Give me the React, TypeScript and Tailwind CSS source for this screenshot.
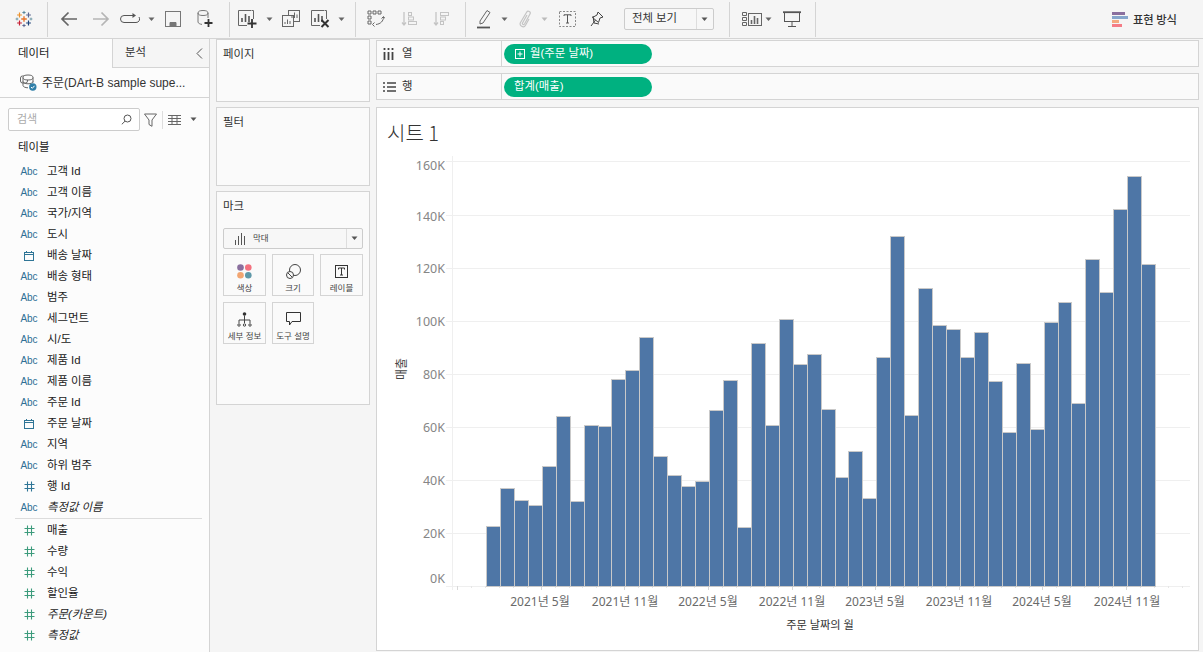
import React from "react";

const FONT = '"Liberation Sans", "Noto Sans CJK KR", sans-serif';
const CHARTFONT = '"Noto Sans", "Noto Sans CJK KR", sans-serif';
const KFONT = '"Noto Sans CJK KR", "Noto Sans", sans-serif';

const tops = [527,489,501,506,467,417,502,426,427,380,371,338,457,476,487,482,411,381,528,344,426,320,365,355,410,478,452,499,358,237,416,289,326,330,358,333,382,433,364,430,323,303,404,260,293,210,177,265];
const grid = [161,215,268,321,374,427,480,533,586];
const yLabels: [string, number][] = [["160K",165],["140K",216],["120K",268],["100K",321],["80K",374],["60K",427],["40K",480],["20K",533],["0K",578]];
const xLabels: [string, number][] = [["2021년 5월",540],["2021년 11월",625],["2022년 5월",708],["2022년 11월",792],["2023년 5월",875],["2023년 11월",959],["2024년 5월",1042],["2024년 11월",1127]];

const Sep = () => <div className="h-[35px] w-px shrink-0 bg-[#d4d4d4]" />;
const Slot = ({ w, children }: { w: number; children?: React.ReactNode }) => (
  <div className="flex shrink-0 items-center justify-center" style={{ width: w }}>{children}</div>
);
const Caret = ({ c = "#666" }: { c?: string }) => (
  <svg width="8" height="5" viewBox="0 0 8 5"><path d="M0.5 0.5h6l-3 3.5z" fill={c} /></svg>
);

const Logo = () => {
  const plus = (x: number, y: number, s: number, c: string, w = 1.4) => (
    <path key={`${x}${y}`} d={`M${x - s} ${y}h${2 * s}M${x} ${y - s}v${2 * s}`} stroke={c} strokeWidth={w} />
  );
  return (
    <svg width="18" height="18" viewBox="0 0 18 18" fill="none">
      {plus(9, 9, 2.8, "#e8762d", 1.4)}
      {plus(9, 2.5, 1.6, "#5b879b", 1)}
      {plus(9, 15.5, 1.6, "#5b6591", 1)}
      {plus(2, 9, 1.4, "#7099a6", 1)}
      {plus(16, 9, 1.4, "#7099a6", 1)}
      {plus(4.5, 5, 2.4, "#eb912b", 1.2)}
      {plus(13.5, 5, 2.4, "#5c6692", 1.2)}
      {plus(4.5, 13, 2.4, "#c72035", 1.2)}
      {plus(13.5, 13, 2.4, "#1f447a", 1.2)}
    </svg>
  );
};

const BarsSquare = ({ extra }: { extra?: React.ReactNode }) => (
  <svg width="22" height="20" viewBox="0 0 22 20" fill="none">
    <path d="M14 1.500H1.500v15H10" stroke="#666" />
    <path d="M14.500 1.500H16.500V10" stroke="#666" />
    <path d="M5 13V9M8.500 13V5M12 13V7" stroke="#555" strokeWidth="1.600" />
    {extra}
  </svg>
);

const Abc = () => <span className="text-[10px] leading-none text-[#2f6f95]">Abc</span>;
const Cal = () => (
  <svg width="12" height="12" viewBox="0 0 12 12" fill="none" stroke="#2f7596"><rect x="1.500" y="2.500" width="9" height="8" /><path d="M1.500 4.500h9M3.500 1v2M8.500 1v2" /></svg>
);
const Hash = ({ c }: { c: string }) => (
  <svg width="11" height="11" viewBox="0 0 11 11" fill="none" stroke={c} strokeWidth="1.100"><path d="M0.500 3.500h10M0.500 7.500h10M3.500 0.500v10M7.500 0.500v10" /></svg>
);

type F = [string, "a" | "c" | "hb" | "hg", boolean?];
const dims: F[] = [["고객 Id","a"],["고객 이름","a"],["국가/지역","a"],["도시","a"],["배송 날짜","c"],["배송 형태","a"],["범주","a"],["세그먼트","a"],["시/도","a"],["제품 Id","a"],["제품 이름","a"],["주문 Id","a"],["주문 날짜","c"],["지역","a"],["하위 범주","a"],["행 Id","hb"],["측정값 이름","a",true]];
const meas: F[] = [["매출","hg"],["수량","hg"],["수익","hg"],["할인율","hg"],["주문(카운트)","hg",true],["측정값","hg",true]];

const Field = ({ f }: { f: F }) => (
  <div className="flex h-[21px] items-center">
    <div className="flex w-[47px] shrink-0 items-center justify-center pl-[11px]">
      {f[1] === "a" && <Abc />}
      {f[1] === "c" && <Cal />}
      {f[1] === "hb" && <Hash c="#2f7596" />}
      {f[1] === "hg" && <Hash c="#3c9b7c" />}
    </div>
    <span className={`text-[11.4px] text-[#222] ${f[2] ? "italic" : ""}`}>{f[0]}</span>
  </div>
);

const MarkBtn = ({ label, children }: { label: string; children: React.ReactNode }) => (
  <div className="flex h-[42px] flex-col items-center border border-[#d4d4d4] bg-[#fafafa]">
    <div className="flex h-[28px] items-center justify-center pt-1">{children}</div>
    <span className="whitespace-nowrap text-[8.5px] leading-[10px] text-[#444]">{label}</span>
  </div>
);

const Shelf = ({ icon, name, pill, plus }: { icon: React.ReactNode; name: string; pill: string; plus?: boolean }) => (
  <div className="flex h-[27px] items-center border border-[#d4d4d4] bg-[#fafafa]">
    <div className="flex h-full w-[125px] shrink-0 items-center border-r border-[#d4d4d4] pl-[6px]">
      <div className="flex w-[19px] justify-start">{icon}</div>
      <span className="text-[11.4px] text-[#333]">{name}</span>
    </div>
    <div className="ml-[2px] flex h-[20px] w-[148px] items-center gap-[5px] rounded-full bg-[#00b180] pl-[11px] text-[11.4px] text-white">
      {plus && (
        <svg width="10" height="10" viewBox="0 0 10 10" fill="none" stroke="#fff"><rect x="0.500" y="0.500" width="9" height="9" /><path d="M2.500 5h5M5 2.500v5" /></svg>
      )}
      <span className={plus ? "" : "-ml-[1px]"}>{pill}</span>
    </div>
  </div>
);

const Chart = () => (
  <svg className="block h-full w-full" viewBox="377 108 821 542" fill="none" style={{ fontFamily: CHARTFONT }}>
    {grid.map((y) => <path key={y} d={`M446 ${y + 0.5}H1190`} stroke="#efefef" />)}
    <path d="M452.500 156V590" stroke="#efefef" />
    {Array.from({ length: 53 }, (_, i) => {
      const x = Math.round(457 + i * 13.94) + 0.5;
      const major = i % 6 === 0;
      return <path key={i} d={`M${x} 586V${major ? 590 : 588}`} stroke={major ? "#d8d8d8" : "#e6e6e6"} />;
    })}
    {tops.map((t, i) => {
      const x0 = Math.round(486 + i * 13.94);
      const x1 = Math.round(486 + (i + 1) * 13.94);
      return <rect key={i} x={x0 + 0.5} y={t - 0.5} width={x1 - x0} height={586 - t + 1} fill="#4e76a6" stroke="#c9c9c9" />;
    })}
    {yLabels.map(([l, y]) => <text key={l} x="445" y={y + 4.5} textAnchor="end" fontSize="12.500" fill="#868686">{l}</text>)}
    {xLabels.map(([l, x]) => <text key={l} x={x} y="606" textAnchor="middle" fontSize="12" fill="#6a6a6a">{l}</text>)}
    <text x="820" y="629" textAnchor="middle" fontSize="11.200" fill="#333">주문 날짜의 월</text>
    <text transform="translate(406 369) rotate(-90)" textAnchor="middle" fontSize="12" fill="#444">매출</text>
  </svg>
);

export default function App() {
  return (
    <div className="flex h-[652px] w-[1203px] flex-col overflow-hidden bg-[#f5f5f5]" style={{ fontFamily: FONT }}>
      {/* toolbar */}
      <div className="flex h-[39px] shrink-0 items-center border-b border-[#d4d4d4]">
        <Slot w={47}><Logo /></Slot>
        <Sep />
        <Slot w={42}>
          <svg width="18" height="16" viewBox="0 0 18 16" fill="none" stroke="#666" strokeWidth="1.700"><path d="M17 8H2M8.500 1.500L2 8l6.500 6.500" /></svg>
        </Slot>
        <Slot w={22}>
          <svg width="18" height="16" viewBox="0 0 18 16" fill="none" stroke="#b5b5b5" strokeWidth="1.700"><path d="M1 8h15M9.500 1.500L16 8l-6.500 6.500" /></svg>
        </Slot>
        <Slot w={36}>
          <svg width="20" height="14" viewBox="0 0 20 14" fill="none" stroke="#555"><path d="M13 3.500H4a3.500 3.500 0 0 0 0 7h12a3.500 3.500 0 0 0 3-5.500" /><path d="M12.500 1v5l3.500-2.500z" fill="#555" stroke="none" /></svg>
        </Slot>
        <Slot w={8}><Caret /></Slot>
        <Slot w={34}>
          <svg width="16" height="16" viewBox="0 0 16 16" fill="none" stroke="#777"><rect x="0.500" y="0.500" width="15" height="15" /><path d="M5 15v-3.500h6V15z" fill="#777" /></svg>
        </Slot>
        <Slot w={30}>
          <svg width="16" height="18" viewBox="0 0 16 18" fill="none" stroke="#777"><ellipse cx="6" cy="3" rx="5" ry="2.500" /><path d="M1 3v9c0 1.200 2 2.200 4 2.400M11 3v5" /><path d="M11.500 9v8M7.500 13h8" stroke="#333" strokeWidth="1.800" /></svg>
        </Slot>
        <Slot w={9} />
        <Sep />
        <Slot w={36}>
          <BarsSquare extra={<path d="M15 10v9M10.500 14.500h9" stroke="#333" strokeWidth="1.800" />} />
        </Slot>
        <Slot w={8}><Caret /></Slot>
        <Slot w={34}>
          <svg width="18" height="18" viewBox="0 0 18 18" fill="none" stroke="#666"><rect x="6.500" y="0.500" width="11" height="11" fill="#f5f5f5" /><rect x="0.500" y="5.500" width="11" height="11" fill="#f5f5f5" /><path d="M10 8V5.500M12.500 8V2.500M15 8V4.500M3 14v-2M5.500 14V9.500M8 14v-3" /></svg>
        </Slot>
        <Slot w={26}>
          <BarsSquare extra={<path d="M11.500 11l7 7M18.500 11l-7 7" stroke="#333" strokeWidth="2" />} />
        </Slot>
        <Slot w={4} />
        <Slot w={8}><Caret /></Slot>
        <Slot w={9} />
        <Sep />
        <Slot w={40}>
          <svg width="18" height="18" viewBox="0 0 18 18" fill="none" stroke="#666"><path d="M1 1h3v3H1zM6 1h3v3H6zM11 1h3v3h-3zM1 6h3v3H1zM1 11h3v3H1z" /><path d="M16.500 7c0 4-3 7-7.500 7.500M7.500 12.500l-2 2 2 2M14.500 8.500l2-2 1.500 2" /></svg>
        </Slot>
        <Slot w={26}>
          <svg width="16" height="16" viewBox="0 0 16 16" fill="none" stroke="#c4c4c4"><path d="M3 1v13M1 11.500L3 14l2-2.500" strokeWidth="1.300" /><rect x="7.500" y="1.500" width="3" height="3" /><rect x="7.500" y="6" width="5" height="3" /><rect x="7.500" y="10.500" width="8" height="3" /></svg>
        </Slot>
        <Slot w={38}>
          <svg width="16" height="16" viewBox="0 0 16 16" fill="none" stroke="#c4c4c4"><path d="M3 1v13M1 11.500L3 14l2-2.500" strokeWidth="1.300" /><rect x="7.500" y="1.500" width="8" height="3" /><rect x="7.500" y="6" width="5" height="3" /><rect x="7.500" y="10.500" width="3" height="3" /></svg>
        </Slot>
        <Slot w={5} />
        <Sep />
        <Slot w={35}>
          <svg width="14" height="20" viewBox="0 0 14 20" fill="none" stroke="#666"><path d="M3 12L10 1.500l3 2L6 14l-3 1z" /><path d="M0 18.500h13" stroke="#555" strokeWidth="1.800" /></svg>
        </Slot>
        <Slot w={8}><Caret /></Slot>
        <Slot w={32}>
          <svg width="12" height="18" viewBox="0 0 12 18" fill="none" stroke="#c4c4c4" strokeWidth="1.200"><path d="M8 5L3.500 13c-.6 1.200 1.200 2.200 2 1L11 4c1.200-2.200-2-4-3.400-1.800L1.500 12.500c-1.800 3.200 3.200 6 5 2.800L10 9" /></svg>
        </Slot>
        <Slot w={8}><Caret c="#bbb" /></Slot>
        <Slot w={36}>
          <svg width="17" height="16" viewBox="0 0 17 16" fill="none"><rect x="0.500" y="0.500" width="16" height="15" stroke="#888" strokeDasharray="2 1.500" /><path d="M5 5V3.800h7V5M8.500 3.800v8.200M7 12h3" stroke="#555" /></svg>
        </Slot>
        <Slot w={24}>
          <svg width="14" height="17" viewBox="0 0 14 17" fill="none" stroke="#444"><path d="M8 1l5 5-3 1-1.500 4.500L2.500 6.500 7 4z" /><path d="M5.500 9L1 15" /><path d="M3 5L4 12l5 1" /></svg>
        </Slot>
        <Slot w={15} />
        <div className="flex h-[22px] w-[90px] shrink-0 items-center rounded-[2px] border border-[#ccc] bg-[#f7f7f7]">
          <span className="w-[71px] pl-[7px] text-[11.4px] text-[#333]">전체 보기</span>
          <div className="flex h-full flex-1 items-center justify-center border-l border-[#ddd]"><Caret c="#555" /></div>
        </div>
        <Slot w={15} />
        <Sep />
        <Slot w={12} />
        <Slot w={20}>
          <svg width="20" height="15" viewBox="0 0 20 15" fill="none" stroke="#666"><path d="M.5.500h4v3h-4zM.500 5.500h4v3h-4zM.500 10.500h4v3h-4z" /><rect x="6.500" y="1.500" width="13" height="12" /><path d="M9.500 12V8M12.500 12V4M15.500 12V6" strokeWidth="1.600" /></svg>
        </Slot>
        <Slot w={3} />
        <Slot w={8}><Caret /></Slot>
        <Slot w={38}>
          <svg width="18" height="17" viewBox="0 0 18 17" fill="none" stroke="#555"><path d="M0 1.200h18" strokeWidth="1.800" /><rect x="1.500" y="1.500" width="15" height="9" /><path d="M9 10.500v5M5 15.500h8" /></svg>
        </Slot>
        <Slot w={4} />
        <Sep />
        <div className="ml-auto flex items-center gap-[5px] pr-[26px]">
          <svg width="16" height="15" viewBox="0 0 16 15">
            <rect x="0" y="0" width="13" height="3" fill="#8a6f9e" />
            <rect x="0" y="4" width="16" height="3" fill="#86a6cc" />
            <rect x="0" y="8" width="7" height="3" fill="#f4a97f" />
            <rect x="0" y="12" width="10" height="3" fill="#f47c86" />
          </svg>
          <span className="text-[11.3px] font-medium text-[#333]" style={{ fontFamily: KFONT }}>표현 방식</span>
        </div>
      </div>

      {/* body */}
      <div className="flex min-h-0 flex-1">
        {/* sidebar */}
        <div className="flex w-[210px] shrink-0 flex-col border-r border-[#d4d4d4] bg-[#fcfcfc]">
          <div className="flex h-[29px] shrink-0">
            <div className="flex w-[112px] items-center pl-[18px] text-[11.4px] text-[#222]">데이터</div>
            <div className="flex flex-1 items-center justify-between border-b border-l border-[#d4d4d4] bg-[#f5f5f5] pl-[12px] pr-[6px] text-[11.4px] text-[#333]">
              <span>분석</span>
              <svg width="7" height="11" viewBox="0 0 7 11" fill="none" stroke="#555"><path d="M6 .5L1 5.500l5 5" /></svg>
            </div>
          </div>
          <div className="flex h-[30px] shrink-0 items-center border-b border-[#d4d4d4] pl-[20px]">
            <svg width="17" height="17" viewBox="0 0 17 17" fill="none" stroke="#666" className="mr-[5px]"><rect x="0.500" y="2" width="7" height="7" rx="2" /><ellipse cx="8" cy="3.500" rx="5" ry="2.500" fill="#fcfcfc" /><path d="M3 3.500v8c0 1.200 2.200 2.300 5 2.300M13 3.500v5M3 7.500c0 1.300 2.200 2.300 5 2.300s5-1 5-2.300" /><circle cx="12.800" cy="13" r="3.700" fill="#2f7fa8" stroke="none" /><path d="M11 13l1.300 1.300 2.200-2.500" stroke="#fff" /></svg>
            <span className="text-[12px] text-[#333]">주문(DArt-B sample supe...</span>
          </div>
          <div className="mt-[10px] flex h-[23px] shrink-0 items-center pl-[8px]">
            <div className="flex h-[23px] w-[132px] items-center justify-between rounded-[2px] border border-[#ccc] bg-white pl-[8px] pr-[7px]">
              <span className="text-[11px] text-[#aaa]">검색</span>
              <svg width="11" height="11" viewBox="0 0 11 11" fill="none" stroke="#555"><circle cx="6.500" cy="4.500" r="3.500" /><path d="M4 7.200L.8 10.300" /></svg>
            </div>
            <svg width="13" height="14" viewBox="0 0 13 14" fill="none" stroke="#666" className="ml-[4px]"><path d="M.5 1h12L8 7v6.300L5 11.500V7z" /></svg>
            <div className="ml-[5px] h-[18px] w-px bg-[#ddd]" />
            <svg width="13" height="10" viewBox="0 0 13 10" fill="none" stroke="#666" className="ml-[5px]"><path d="M0 .5h13M0 3.500h13M0 6.500h13M0 9.500h13M4 0v10M9 0v10" /></svg>
            <span className="ml-[9px]"><Caret c="#555" /></span>
          </div>
          <div className="mt-[3px] flex h-[23px] shrink-0 items-center pt-[4px] pl-[18px] text-[11.4px] text-[#222]">테이블</div>
          <div className="mt-[4px]">
            {dims.map((f) => <Field key={f[0]} f={f} />)}
          </div>
          <div className="mb-[1px] ml-[15px] mr-[7px] h-px shrink-0 bg-[#dcdcdc]" />
          <div>
            {meas.map((f) => <Field key={f[0]} f={f} />)}
          </div>
        </div>

        {/* middle */}
        <div className="ml-[6px] flex w-[154px] shrink-0 flex-col gap-[5px]">
          <div className="h-[63px] border border-[#d4d4d4] bg-[#fafafa] px-[6px] pt-[6px] text-[11.4px] text-[#333]">페이지</div>
          <div className="h-[79px] border border-[#d4d4d4] bg-[#fafafa] px-[6px] pt-[6px] text-[11.4px] text-[#333]">필터</div>
          <div className="h-[214px] border border-[#d4d4d4] bg-[#fafafa] px-[6px] pt-[6px]">
            <div className="text-[11.4px] text-[#333]">마크</div>
            <div className="mt-[13px] flex h-[21px] items-center rounded-[2px] border border-[#ccc] bg-[#f7f7f7]">
              <svg width="11" height="12" viewBox="0 0 11 12" fill="none" stroke="#555" className="ml-[11px]"><path d="M.5 12V7M3.500 12V3M6.500 12V0M9.500 12V3" /></svg>
              <span className="ml-[7px] w-[93px] text-[8.5px] text-[#444]">막대</span>
              <div className="flex h-full flex-1 items-center justify-center border-l border-[#ddd]"><Caret c="#555" /></div>
            </div>
            <div className="mt-[5px] grid grid-cols-[43px_42px_43px] gap-x-[6px] gap-y-[6px]">
              <MarkBtn label="색상">
                <svg width="15" height="15" viewBox="0 0 15 15"><circle cx="3.500" cy="3.500" r="3.300" fill="#8a6f9e" /><circle cx="11.300" cy="3.500" r="3.300" fill="#f4717f" /><circle cx="3.500" cy="11.300" r="3.300" fill="#f2a571" /><circle cx="11.300" cy="11.300" r="3.300" fill="#5f98a8" /></svg>
              </MarkBtn>
              <MarkBtn label="크기">
                <svg width="15" height="15" viewBox="0 0 15 15" fill="none" stroke="#444"><circle cx="9" cy="6" r="5.500" /><circle cx="4" cy="11" r="3.500" fill="#fafafa" /><path d="M2 9l4 4" /></svg>
              </MarkBtn>
              <MarkBtn label="레이블">
                <svg width="13" height="13" viewBox="0 0 13 13" fill="none" stroke="#333"><rect x="0.500" y="0.500" width="12" height="12" /><path d="M3.500 4.500V3h6v1.500M6.500 3v7M5 10h3" /></svg>
              </MarkBtn>
              <MarkBtn label="세부 정보">
                <svg width="15" height="15" viewBox="0 0 15 15" fill="none" stroke="#444"><circle cx="7.500" cy="2" r="1.800" fill="#333" stroke="none" /><path d="M7.500 3.500V8M2 11V8h11v3M7.500 8v3" /><circle cx="2" cy="13" r="1.200" /><circle cx="7.500" cy="13" r="1.200" /><circle cx="13" cy="13" r="1.200" /></svg>
              </MarkBtn>
              <MarkBtn label="도구 설명">
                <svg width="15" height="14" viewBox="0 0 15 14" fill="none" stroke="#333"><path d="M.5.500h14v9H6L3.500 13V9.500H.5z" /></svg>
              </MarkBtn>
            </div>
          </div>
        </div>

        {/* right */}
        <div className="ml-[6px] flex min-w-0 w-[823px] shrink-0 flex-col">
          <div className="mt-[1px]">
            <Shelf name="열" pill="월(주문 날짜)" plus icon={<svg width="11" height="12" viewBox="0 0 11 12" stroke="#444" strokeWidth="1.800"><path d="M1.500 4v8M5.500 4v8M9.500 4v8M1.500 0v2M5.500 0v2M9.500 0v2" /></svg>} />
          </div>
          <div className="mt-[6px]">
            <Shelf name="행" pill="합계(매출)" icon={<svg width="13" height="10" viewBox="0 0 13 10" stroke="#444" strokeWidth="1.600"><path d="M0 1h2M4 1h9M0 5h2M4 5h9M0 9h2M4 9h9" /></svg>} />
          </div>
          <div className="relative mt-[7px] h-[544px] border border-[#d4d4d4] bg-white">
            <Chart />
            <span className="absolute left-[10px] top-[11px] text-[20px] leading-[28px] text-[#333]" style={{ fontFamily: KFONT, fontWeight: 300 }}>시트 1</span>
          </div>
        </div>
      </div>
    </div>
  );
}
